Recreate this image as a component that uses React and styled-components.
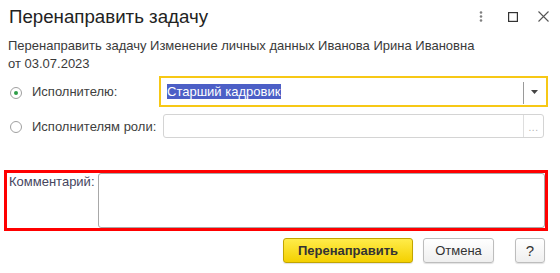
import React from "react";
import styled, { createGlobalStyle } from "styled-components";

const GlobalStyle = createGlobalStyle`
  html, body {
    margin: 0;
    padding: 0;
    background: #fff;
  }
  body {
    font-family: "Liberation Sans", Arial, sans-serif;
    color: #333;
  }
`;

const Dialog = styled.div`
  width: 560px;
  height: 273px;
  box-sizing: border-box;
  background: #fff;
  overflow: hidden;
`;

const Header = styled.div`
  display: flex;
  justify-content: space-between;
  align-items: flex-start;
  height: 37px;
  box-sizing: border-box;
  padding: 7px 11px 0 9px;
`;

const Title = styled.h1`
  margin: 0;
  font-size: 18.7px;
  line-height: 20px;
  font-weight: 400;
  color: #222;
`;

const WindowControls = styled.div`
  display: flex;
  align-items: center;
  margin-top: 4px;
`;

const ControlIcon = styled.svg`
  display: block;
  margin-left: ${(p) => p.$gap || 0}px;
`;

const Description = styled.div`
  padding: 0 8px;
  font-size: 13px;
  line-height: 18px;
  color: #3a3a3a;
`;

const Form = styled.div`
  margin-top: 3px;
  padding-right: 16px;
`;

const Row = styled.div`
  display: flex;
  align-items: center;
  height: ${(p) => p.$height}px;
  margin-top: ${(p) => p.$offset || 0}px;
`;

const RadioLabel = styled.label`
  display: flex;
  align-items: center;
  width: 163px;
  flex-shrink: 0;
  box-sizing: border-box;
  padding-left: 10px;
  font-size: 13px;
  color: #404040;
`;

const Radio = styled.span`
  position: relative;
  width: 12px;
  height: 12px;
  box-sizing: border-box;
  border: 1px solid #a0a0a0;
  border-radius: 50%;
  background: #fff;
  margin-right: 10px;
  margin-top: 2px;

  &::after {
    content: "";
    display: ${(p) => (p.$checked ? "block" : "none")};
    position: absolute;
    left: 3px;
    top: 3px;
    width: 4px;
    height: 4px;
    border-radius: 50%;
    background: #2f9e48;
  }
`;

const Field = styled.div`
  flex: 1;
  display: flex;
  align-items: stretch;
  height: 100%;
  box-sizing: border-box;
  border: ${(p) => (p.$focused ? "2px solid #f7c815" : "1px solid #d4d4d4")};
  border-radius: ${(p) => (p.$focused ? 0 : 3)}px;
  margin: ${(p) => (p.$focused ? "0 -4px 0 -4px" : "0")};
  background: #fff;
`;

const FieldText = styled.div`
  flex: 1;
  display: flex;
  align-items: center;
  padding-left: 6px;
  font-size: 13px;
`;

const Selection = styled.span`
  background: #4c5fc6;
  color: #fff;
  line-height: 15px;
  padding: 0 1px 0 0;
`;

const DropButton = styled.div`
  width: 23px;
  display: flex;
  align-items: center;
  justify-content: center;
  position: relative;

  &::before {
    content: "";
    position: absolute;
    left: 0;
    top: 4px;
    bottom: 1px;
    width: 1px;
    background: #9a9a9a;
  }
`;

const ChoiceButton = styled.div`
  width: 20px;
  display: flex;
  align-items: center;
  justify-content: center;
  border-left: 1px solid #dedede;
  color: #b0b0b0;
  font-size: 10px;
  letter-spacing: 0.5px;
  padding-top: 3px;
  box-sizing: border-box;
`;

const CommentBox = styled.div`
  display: flex;
  height: 61px;
  box-sizing: border-box;
  margin: 32px 12px 0 4px;
  border: 3px solid #ff0000;
`;

const CommentLabel = styled.div`
  width: 91px;
  flex-shrink: 0;
  box-sizing: border-box;
  padding: 1px 0 0 2px;
  font-size: 13px;
  line-height: 16px;
  color: #45455e;
`;

const CommentArea = styled.div`
  flex: 1;
  box-sizing: border-box;
  border: 1px solid #a8a8a8;
  border-radius: 3px;
  background: #fff;
`;

const Footer = styled.div`
  display: flex;
  justify-content: flex-end;
  margin-top: 7px;
  padding-right: 15px;
`;

const Button = styled.button`
  height: 25px;
  width: ${(p) => p.$width}px;
  margin-left: ${(p) => p.$gap || 0}px;
  box-sizing: border-box;
  padding: 0;
  border-radius: 3px;
  font-family: "Liberation Sans", Arial, sans-serif;
  font-size: ${(p) => p.$size || 13}px;
  font-weight: ${(p) => (p.$primary ? 700 : 400)};
  color: #333;
  border: 1px solid ${(p) => (p.$primary ? "#c2a500" : "#bdbdbd")};
  background: ${(p) =>
    p.$primary
      ? "linear-gradient(#ffec4a, #f4d000)"
      : "linear-gradient(#ffffff, #efefef)"};
  box-shadow: 0 1px 1px rgba(0, 0, 0, 0.12);
`;

export default function App() {
  return (
    <Dialog>
      <GlobalStyle />
      <Header>
        <Title>Перенаправить задачу</Title>
        <WindowControls>
          <ControlIcon width="4" height="11" viewBox="0 0 4 11">
            <circle cx="2" cy="1.5" r="1.3" fill="#808080" />
            <circle cx="2" cy="5.5" r="1.3" fill="#808080" />
            <circle cx="2" cy="9.5" r="1.3" fill="#808080" />
          </ControlIcon>
          <ControlIcon $gap={25} width="10" height="10" viewBox="0 0 10 10">
            <rect x="0.6" y="0.6" width="8.8" height="8.8" fill="none" stroke="#333" strokeWidth="1.2" />
          </ControlIcon>
          <ControlIcon $gap={20} width="11" height="11" viewBox="0 0 11 11">
            <path d="M0.5 0.5 L10.5 10.5 M10.5 0.5 L0.5 10.5" stroke="#555" strokeWidth="1.1" />
          </ControlIcon>
        </WindowControls>
      </Header>

      <Description>
        Перенаправить задачу Изменение личных данных Иванова Ирина Ивановна
        <br />
        от 03.07.2023
      </Description>

      <Form>
        <Row $height={31}>
          <RadioLabel>
            <Radio $checked />
            Исполнителю:
          </RadioLabel>
          <Field $focused>
            <FieldText>
              <Selection>Старший кадровик</Selection>
            </FieldText>
            <DropButton>
              <svg width="7" height="4" viewBox="0 0 7 4">
                <path d="M0 0 H7 L3.5 4 Z" fill="#444" />
              </svg>
            </DropButton>
          </Field>
        </Row>
        <Row $height={24} $offset={7}>
          <RadioLabel>
            <Radio />
            Исполнителям роли:
          </RadioLabel>
          <Field>
            <FieldText />
            <ChoiceButton>...</ChoiceButton>
          </Field>
        </Row>
      </Form>

      <CommentBox>
        <CommentLabel>Комментарий:</CommentLabel>
        <CommentArea />
      </CommentBox>

      <Footer>
        <Button $primary $width={130}>Перенаправить</Button>
        <Button $width={71} $gap={10}>Отмена</Button>
        <Button $width={30} $gap={21} $size={15}>?</Button>
      </Footer>
    </Dialog>
  );
}
